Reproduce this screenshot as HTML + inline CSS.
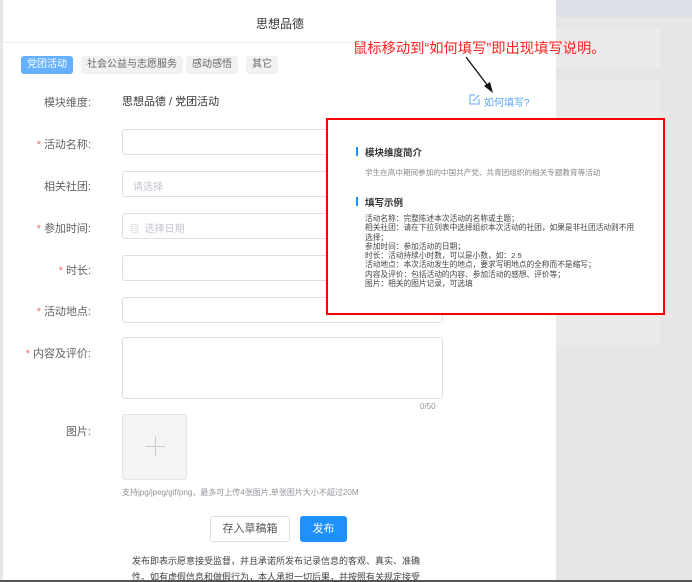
<!DOCTYPE html>
<html style="width:692px;height:582px;overflow:hidden"><head><meta charset="utf-8"><style>
*{margin:0;padding:0;box-sizing:border-box}
body{width:692px;height:582px;overflow:hidden;background:#e6e6e6;font-family:"Liberation Sans","Noto Sans CJK SC",sans-serif;position:relative}
.a{position:absolute}
.modal{left:3px;top:0;width:553px;height:582px;background:#fff}
.lbl{position:absolute;right:601px;font-size:11px;color:#606266;white-space:nowrap}
.lbl b{color:#f56c6c;font-weight:normal;margin-right:3px}
.inp{position:absolute;left:122px;width:321px;height:26px;border:1px solid #dcdfe6;border-radius:3px;background:#fff;font-size:10px;color:#c0c4cc;padding:6px 10px}
.tag{position:absolute;top:56px;height:18px;font-size:10px;line-height:18px;padding:0 6px;border-radius:3px;background:#f2f2f2;color:#666}
</style></head><body>
<div class="a" style="left:556px;top:0;width:136px;height:17px;background:#dde0e6"></div>
<div class="a" style="left:556px;top:28px;width:104px;height:40px;background:#ebebeb"></div>
<div class="a" style="left:556px;top:80px;width:104px;height:265px;background:#ebebeb"></div>
<div class="a modal"></div>
<div class="a" style="left:0;top:0;width:3px;height:582px;background:#e6e6e6"></div>
<div class="a" style="left:3px;top:42px;width:553px;height:1px;background:#eceef2"></div>
<div class="a" style="left:256px;top:15px;font-size:12px;color:#333">思想品德</div>
<div class="tag" style="left:21px;background:#66b1ff;color:#fff">党团活动</div>
<div class="tag" style="left:81px">社会公益与志愿服务</div>
<div class="tag" style="left:186px">感动感悟</div>
<div class="tag" style="left:246px">其它</div>
<div class="lbl" style="top:94px">模块维度:</div>
<div class="a" style="left:122px;top:93px;font-size:11px;color:#333">思想品德 / 党团活动</div>
<svg class="a" style="left:469px;top:94px" width="11" height="11" viewBox="0 0 11 11"><path d="M6 1H1v9h9V5M4 7l6-6" fill="none" stroke="#5ea6f8" stroke-width="1"/></svg>
<div class="a" style="left:484px;top:94px;font-size:10px;color:#5ea6f8">如何填写?</div>
<div class="lbl" style="top:136px"><b>*</b>活动名称:</div>
<div class="inp" style="top:129px"></div>
<div class="lbl" style="top:178px">相关社团:</div>
<div class="inp" style="top:171px">请选择</div>
<div class="lbl" style="top:220px"><b>*</b>参加时间:</div>
<div class="inp" style="top:213px;padding-left:7px"><span style="font-size:9px">▤</span>&nbsp; 选择日期</div>
<div class="lbl" style="top:262px"><b>*</b>时长:</div>
<div class="inp" style="top:255px"></div>
<div class="lbl" style="top:303px"><b>*</b>活动地点:</div>
<div class="inp" style="top:297px"></div>
<div class="lbl" style="top:345px"><b>*</b>内容及评价:</div>
<div class="inp" style="top:337px;height:62px"></div>
<div class="a" style="left:420px;top:402px;font-size:8px;color:#909399">0/50</div>
<div class="lbl" style="top:423px">图片:</div>
<div class="a" style="left:122px;top:414px;width:65px;height:66px;background:#f4f4f4;border:1px solid #e4e4e4;border-radius:3px"></div>
<div class="a" style="left:145px;top:446px;width:20px;height:1px;background:#ccc"></div>
<div class="a" style="left:155px;top:436px;width:1px;height:20px;background:#ccc"></div>
<div class="a" style="left:122px;top:487px;font-size:8px;color:#909399">支持jpg/jpeg/gif/png，最多可上传4张图片,单张图片大小不超过20M</div>
<div class="a" style="left:210px;top:516px;width:80px;height:26px;border:1px solid #dcdfe6;border-radius:3px;font-size:11px;color:#555;text-align:center;line-height:24px">存入草稿箱</div>
<div class="a" style="left:300px;top:516px;width:47px;height:26px;background:#1e90ff;border-radius:3px;font-size:11px;color:#fff;text-align:center;line-height:26px">发布</div>
<div class="a" style="left:132px;top:553px;width:292px;height:27px;overflow:hidden;font-size:9px;line-height:16px;color:#444">发布即表示愿意接受监督，并且承诺所发布记录信息的客观、真实、准确性。如有虚假信息和做假行为，本人承担一切后果，并按照有关规定接受</div>
<div class="a" style="left:0;top:580px;width:692px;height:2px;background:#555"></div>
<div class="a" style="left:353px;top:37px;font-size:14.3px;color:#f22;white-space:nowrap">鼠标移动到“如何填写”即出现填写说明。</div>
<svg class="a" style="left:460px;top:52px" width="40" height="45"><path d="M6 5L31 38" stroke="#111" stroke-width="1.3"/><path d="M33 41L24 34L30 30Z" fill="#111"/></svg>
<div class="a" style="left:326px;top:118px;width:339px;height:197px;border:2px solid #f00;background:#fff"></div>
<div class="a" style="left:356px;top:147px;width:2px;height:9px;background:#1e90ff"></div>
<div class="a" style="left:365px;top:145px;font-size:9.5px;font-weight:bold;color:#333">模块维度简介</div>
<div class="a" style="left:365px;top:167px;font-size:7.6px;color:#888;white-space:nowrap">学生在高中期间参加的中国共产党、共青团组织的相关专题教育等活动</div>
<div class="a" style="left:356px;top:197px;width:2px;height:9px;background:#1e90ff"></div>
<div class="a" style="left:365px;top:195px;font-size:9.5px;font-weight:bold;color:#333">填写示例</div>
<div class="a" style="left:365px;top:214px;white-space:nowrap;font-size:7.7px;line-height:9.3px;color:#444">活动名称：完整陈述本次活动的名称或主题；<br>相关社团：请在下拉列表中选择组织本次活动的社团，如果是非社团活动则不用<br>选择；<br>参加时间：参加活动的日期；<br>时长：活动持续小时数，可以是小数，如：2.5<br>活动地点：本次活动发生的地点，要求写明地点的全称而不是缩写；<br>内容及评价：包括活动的内容、参加活动的感想、评价等；<br>图片：相关的图片记录，可选填</div>
</body></html>
